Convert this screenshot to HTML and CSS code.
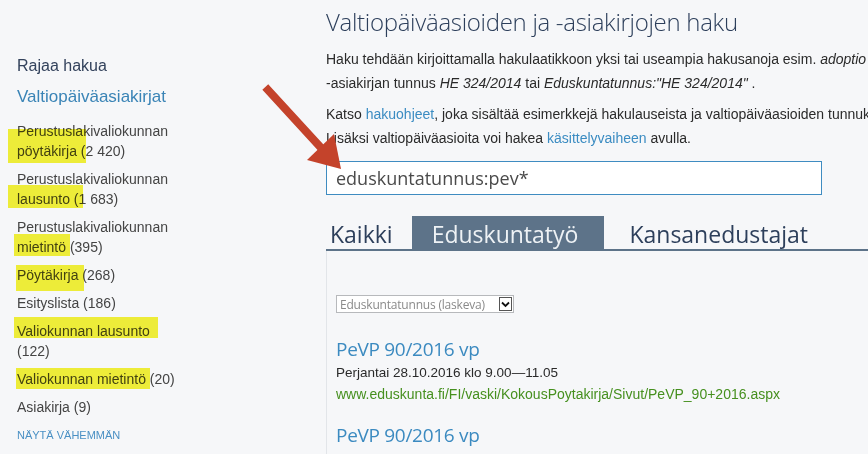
FILE: index.html
```html
<!DOCTYPE html>
<html>
	<head>
		<meta charset="utf-8">
		<title>Valtiopäiväasioiden ja -asiakirjojen haku</title>
		<link rel="stylesheet" href="styles.css">
	</head>
	<body>
		<div class="page">
			<!--rajaus-->
			<aside class="side">
				<h2 class="side-title">Rajaa hakua</h2>
				<h3 class="side-group">Valtiopäiväasiakirjat</h3>
				<ul class="facets">
					<li>Perustuslakivaliokunnan pöytäkirja (2 420)</li>
					<li>Perustuslakivaliokunnan lausunto (1 683)</li>
					<li>Perustuslakivaliokunnan mietintö (395)</li>
					<li>Pöytäkirja (268)</li>
					<li>Esityslista (186)</li>
					<li>Valiokunnan lausunto (122)</li>
					<li>Valiokunnan mietintö (20)</li>
					<li>Asiakirja (9)</li>
				</ul>
				<a class="less" href="#">Näytä vähemmän</a>
				<span class="marker m1"></span>
				<span class="marker m2"></span>
				<span class="marker m3"></span>
				<span class="marker m4"></span>
				<span class="marker m5"></span>
				<span class="marker m6"></span>
			</aside>

			<main class="main">
				<h1 class="title">Valtiopäiväasioiden ja -asiakirjojen haku</h1>
				<p class="intro">Haku tehdään kirjoittamalla hakulaatikkoon yksi tai useampia hakusanoja esim. <i>adoptio</i><br>-asiakirjan tunnus <i>HE 324/2014</i> tai <i>Eduskuntatunnus:"HE 324/2014"</i> .</p>
				<p class="intro">Katso <a href="#">hakuohjeet</a>, joka sisältää esimerkkejä hakulauseista ja valtiopäiväasioiden tunnuk<br>Lisäksi valtiopäiväasioita voi hakea <a href="#">käsittelyvaiheen</a> avulla.</p>
				<input class="search" type="text" value="eduskuntatunnus:pev*">

				<div class="tabs">
					<span class="tab">Kaikki</span>
					<span class="tab current">Eduskuntatyö</span>
					<span class="tab">Kansanedustajat</span>
				</div>

				<div class="results">
					<div class="sort">
						<span class="sort-text">Eduskuntatunnus (laskeva)</span>
						<span class="sort-btn">
							<svg width="9" height="7" viewBox="0 0 9 7"><path d="M1 1.5 L4.5 5 L8 1.5" fill="none" stroke="#111" stroke-width="1.8"/></svg>
						</span>
					</div>
					<div class="hit">
						<a class="hit-title" href="#">PeVP 90/2016 vp</a>
						<div class="hit-date">Perjantai 28.10.2016 klo 9.00—11.05</div>
						<div class="hit-url">www.eduskunta.fi/FI/vaski/KokousPoytakirja/Sivut/PeVP_90+2016.aspx</div>
					</div>
					<div class="hit">
						<a class="hit-title" href="#">PeVP 90/2016 vp</a>
						<div class="hit-date">Perjantai 28.10.2016 klo 9.00—11.05</div>
						<div class="hit-url">www.eduskunta.fi/FI/vaski/KokousPoytakirja/Sivut/PeVP_90+2016.aspx</div>
					</div>
				</div>
			</main>
		</div>

		<!--nuoli-->
		<svg class="arrow" width="868" height="454" viewBox="0 0 868 454">
			<line x1="268" y1="90" x2="324" y2="151" stroke="#c4432b" stroke-width="8" stroke-linecap="square"/>
			<polygon points="341,169 307,160 334,134" fill="#c4432b"/>
		</svg>
	</body>
</html>
```

FILE: styles.css
```css
* {
	margin: 0;
	padding: 0;
}

html, body {
	overflow: hidden;
	height: 100%;
}

body {
	position: relative;
	background-color: #f6f7f9;
	font-family: "Liberation Sans", Arial, sans-serif;
	font-size: 14px;
	color: #2a2a2a;
}

ul {
	list-style: none;
}

a {
	text-decoration: none;
	color: #3b8cc2;
}

.page {
	display: flex;
	width: 1100px;
}

/* rajaus */
.side {
	position: relative;
	width: 309px;
	padding: 56px 0 0 17px;
	flex: none;
}

.side-title {
	font-size: 16px;
	font-weight: normal;
	line-height: 20px;
	color: #33425c;
}

.side-group {
	margin-top: 11px;
	font-size: 17px;
	font-weight: normal;
	line-height: 20px;
	color: #3a84b6;
}

.facets {
	width: 164px;
	margin-top: 14px;
	color: #444;
	line-height: 20px;
}

.facets li {
	margin-bottom: 8px;
}

.less {
	display: block;
	font-size: 11px;
	line-height: 20px;
	text-transform: uppercase;
	color: #4a90c4;
}

.marker {
	position: absolute;
	background-color: #f6f43a;
	mix-blend-mode: multiply;
}

.m1 { left: 8px; top: 129px; width: 78px; height: 34px; }
.m2 { left: 8px; top: 185px; width: 75px; height: 23px; }
.m3 { left: 14px; top: 234px; width: 56px; height: 22px; }
.m4 { left: 16px; top: 265px; width: 68px; height: 26px; }
.m5 { left: 14px; top: 317px; width: 144px; height: 21px; }
.m6 { left: 16px; top: 368px; width: 134px; height: 21px; }

/* haku */
.main {
	width: 700px;
	flex: none;
	padding-top: 4px;
}

.title {
	font-family: "Open Sans", sans-serif;
	font-weight: 300;
	font-size: 24px;
	letter-spacing: -0.3px;
	line-height: 36px;
	color: #2d3f5b;
}

.intro {
	margin-top: 7px;
	line-height: 24px;
	white-space: nowrap;
}

.search {
	display: block;
	width: 496px;
	height: 34px;
	margin-top: 11px;
	padding: 0 9px;
	box-sizing: border-box;
	border: 1px solid #3f8cc1;
	background-color: #fff;
	font-family: "Open Sans", sans-serif;
	font-size: 18px;
	color: #4a4a4a;
	outline: none;
}

.tabs {
	display: flex;
	margin-top: 21px;
	border-bottom: 2px solid #5d7389;
}

.tab {
	padding: 0 4px;
	height: 33px;
	margin-right: 15px;
	font-family: "Open Sans", sans-serif;
	font-size: 23px;
	line-height: 36px;
	color: #2d3f5b;
}

.tab.current {
	padding: 0 26px 0 20px;
	margin-right: 21px;
	background-color: #5d7389;
	color: #eef2f5;
}

.results {
	border-left: 1px solid #e2e5e9;
	padding: 44px 0 0 9px;
}

.sort {
	display: flex;
	width: 178px;
	height: 18px;
	box-sizing: border-box;
	border: 1px solid #b7b9bc;
	background-color: #fff;
	align-items: center;
}

.sort-text {
	flex: 1;
	padding-left: 3px;
	font-family: "Open Sans", sans-serif;
	font-size: 12px;
	letter-spacing: -0.2px;
	color: #8a8a8a;
}

.sort-btn {
	display: flex;
	width: 13px;
	height: 14px;
	margin-right: 1px;
	border: 1px solid #555;
	align-items: center;
	justify-content: center;
	box-sizing: border-box;
}

.hit {
	margin-top: 22px;
}

.hit + .hit {
	margin-top: 16px;
}

.hit-title {
	display: block;
	font-family: "Open Sans", sans-serif;
	font-size: 19px;
	letter-spacing: -0.3px;
	line-height: 28px;
	color: #3b8ac0;
}

.hit-date {
	font-size: 13.5px;
	line-height: 20px;
}

.hit-url {
	line-height: 22px;
	color: #46901f;
}

.arrow {
	position: absolute;
	left: 0;
	top: 0;
	pointer-events: none;
}
```
